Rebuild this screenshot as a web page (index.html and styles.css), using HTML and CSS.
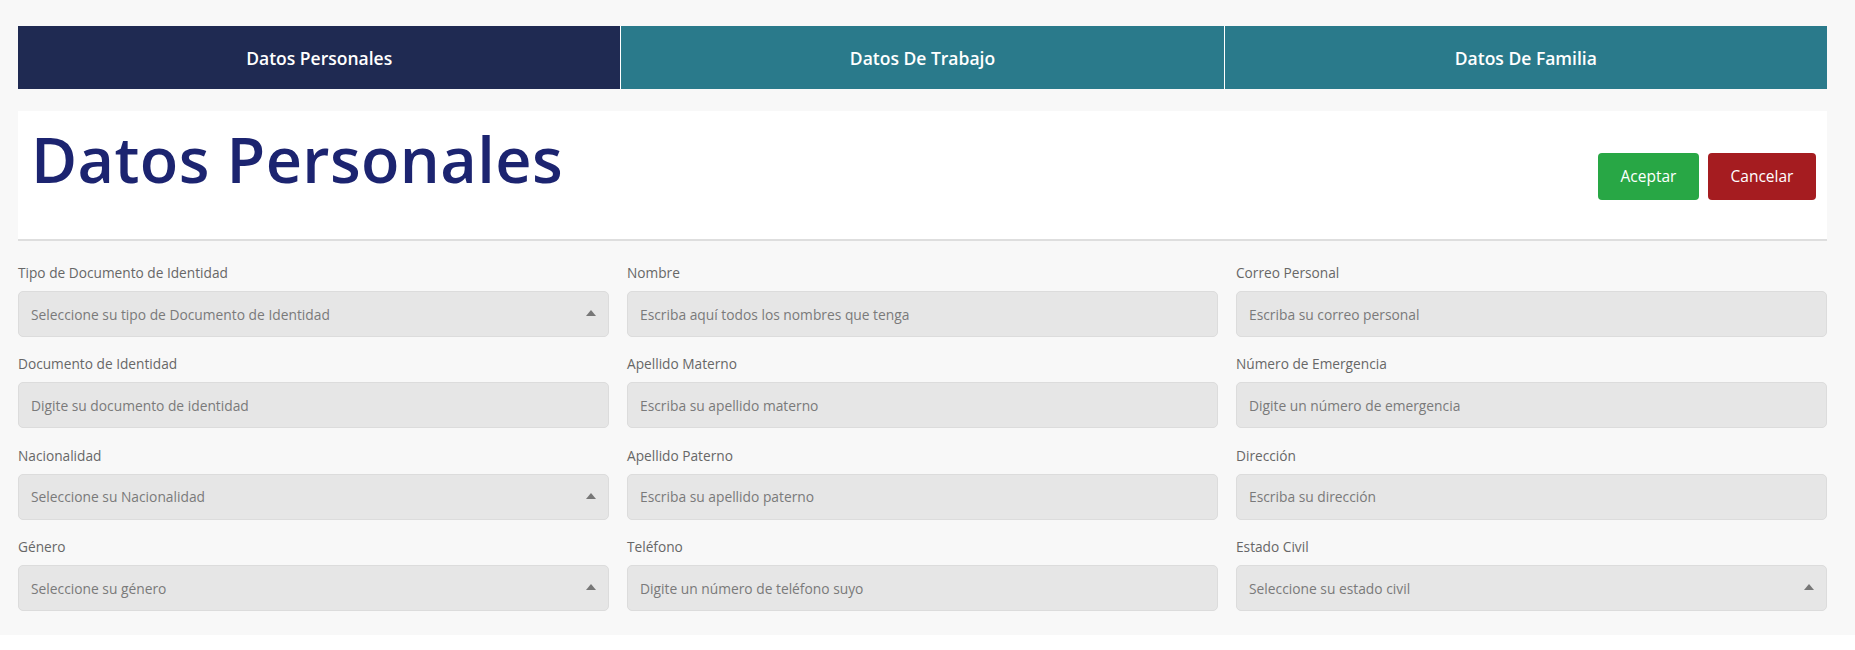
FILE: index.html
```html
<!DOCTYPE html>
<html lang="es">
<head>
<meta charset="utf-8">
<title>Datos Personales</title>
<link rel="stylesheet" href="styles.css">
</head>
<body>
<div class="page">
  <nav class="tabs">
    <div class="tab tab-active">Datos Personales</div>
    <div class="tab">Datos De Trabajo</div>
    <div class="tab">Datos De Familia</div>
  </nav>

  <header class="panel">
    <h1 class="title">Datos Personales</h1>
    <div class="actions">
      <button class="btn btn-ok">Aceptar</button>
      <button class="btn btn-cancel">Cancelar</button>
    </div>
  </header>

  <form class="form">
    <div class="field">
      <label class="label">Tipo de Documento de Identidad</label>
      <div class="input select"><span>Seleccione su tipo de Documento de Identidad</span><i class="caret"></i></div>
    </div>
    <div class="field">
      <label class="label">Nombre</label>
      <div class="input"><span>Escriba aquí todos los nombres que tenga</span></div>
    </div>
    <div class="field">
      <label class="label">Correo Personal</label>
      <div class="input"><span>Escriba su correo personal</span></div>
    </div>

    <div class="field">
      <label class="label">Documento de Identidad</label>
      <div class="input"><span>Digite su documento de identidad</span></div>
    </div>
    <div class="field">
      <label class="label">Apellido Materno</label>
      <div class="input"><span>Escriba su apellido materno</span></div>
    </div>
    <div class="field">
      <label class="label">Número de Emergencia</label>
      <div class="input"><span>Digite un número de emergencia</span></div>
    </div>

    <div class="field">
      <label class="label">Nacionalidad</label>
      <div class="input select"><span>Seleccione su Nacionalidad</span><i class="caret"></i></div>
    </div>
    <div class="field">
      <label class="label">Apellido Paterno</label>
      <div class="input"><span>Escriba su apellido paterno</span></div>
    </div>
    <div class="field">
      <label class="label">Dirección</label>
      <div class="input"><span>Escriba su dirección</span></div>
    </div>

    <div class="field">
      <label class="label">Género</label>
      <div class="input select"><span>Seleccione su género</span><i class="caret"></i></div>
    </div>
    <div class="field">
      <label class="label">Teléfono</label>
      <div class="input"><span>Digite un número de teléfono suyo</span></div>
    </div>
    <div class="field">
      <label class="label">Estado Civil</label>
      <div class="input select"><span>Seleccione su estado civil</span><i class="caret"></i></div>
    </div>
  </form>
</div>
</body>
</html>
```

FILE: styles.css
```css
* { box-sizing: border-box; }

html, body {
  margin: 0;
  padding: 0;
  background: #ffffff;
  font-family: "Open Sans", "Liberation Sans", sans-serif;
}

.page {
  background: #f8f8f8;
  height: 635px;
  padding: 26px 28px 0 18px;
}

.tabs {
  display: flex;
  height: 63px;
  gap: 1px;
  background: #ffffff;
}

.tab {
  flex: 1;
  display: flex;
  align-items: center;
  justify-content: center;
  background: #2a7a8b;
  color: #ffffff;
  font-size: 17.5px;
  font-weight: 600;
}

.tab-active {
  background: #1f2a52;
}

.panel {
  margin-top: 22px;
  height: 130px;
  background: #ffffff;
  border-bottom: 2px solid #dedede;
  display: flex;
  align-items: center;
  justify-content: space-between;
  padding: 0 11px 0 13px;
}

.title {
  margin: 0;
  align-self: flex-start;
  padding-top: 8px;
  font-family: "Open Sans", "Liberation Sans", sans-serif;
  font-size: 63px;
  font-weight: 600;
  line-height: 80px;
  color: #1c2470;
  letter-spacing: 0.4px;
}

.actions {
  display: flex;
  gap: 9px;
  margin-top: 2px;
}

.btn {
  height: 47px;
  border: none;
  border-radius: 4px;
  color: #ffffff;
  font-family: "Open Sans", "Liberation Sans", sans-serif;
  font-size: 15.5px;
  padding: 0;
}

.btn-ok {
  width: 101px;
  background: #28a745;
}

.btn-cancel {
  width: 108px;
  background: #a51c20;
}

.form {
  display: grid;
  grid-template-columns: repeat(3, 1fr);
  column-gap: 18px;
  padding-top: 22px;
}

.field {
  display: flex;
  flex-direction: column;
  margin-bottom: 17.4px;
}

.label {
  height: 20px;
  line-height: 20px;
  font-size: 13.7px;
  color: #676767;
  margin-bottom: 8px;
}

.input {
  height: 46px;
  background: #e6e6e6;
  border: 1px solid #dcdcdc;
  border-radius: 5px;
  display: flex;
  align-items: center;
  justify-content: space-between;
  padding: 0 12px;
  font-size: 13.8px;
  color: #7a7a7a;
}

.caret {
  width: 0;
  height: 0;
  border-left: 5.5px solid transparent;
  border-right: 5.5px solid transparent;
  border-bottom: 6px solid #777777;
  margin-top: -2px;
}
```
